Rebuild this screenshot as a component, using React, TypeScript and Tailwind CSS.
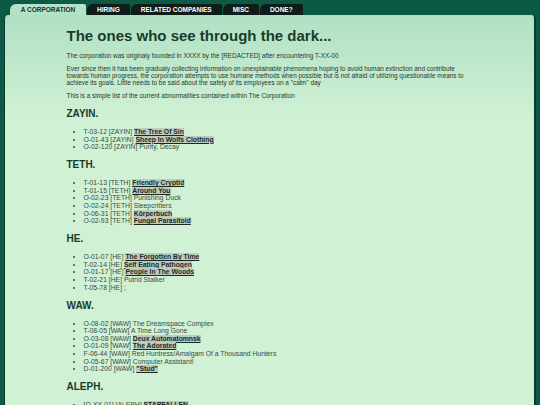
import React from 'react';

type Item = { code: string; name: string; link?: boolean };

const sections: { title: string; items: Item[] }[] = [
  {
    title: 'ZAYIN.',
    items: [
      { code: 'T-03-12 [ZAYIN]', name: 'The Tree Of Sin', link: true },
      { code: 'O-01-43 [ZAYIN]', name: 'Sheep In Wolfs Clothing', link: true },
      { code: 'O-02-120 [ZAYIN]', name: 'Purity, Decay' },
    ],
  },
  {
    title: 'TETH.',
    items: [
      { code: 'T-01-13 [TETH]', name: 'Friendly Cryptid', link: true },
      { code: 'T-01-15 [TETH]', name: 'Around You', link: true },
      { code: 'O-02-23 [TETH]', name: 'Punishing Duck' },
      { code: 'O-02-24 [TETH]', name: 'Sleepcritters' },
      { code: 'O-06-31 [TETH]', name: 'Körperbuch', link: true },
      { code: 'O-02-93 [TETH]', name: 'Fungal Parasitoid', link: true },
    ],
  },
  {
    title: 'HE.',
    items: [
      { code: 'O-01-07 [HE]', name: 'The Forgotten By Time', link: true },
      { code: 'T-02-14 [HE]', name: 'Self Eating Pathogen', link: true },
      { code: 'O-01-17 [HE]', name: 'People In The Woods', link: true },
      { code: 'T-02-21 [HE]', name: 'Putrid Stalker' },
      { code: 'T-05-78 [HE]', name: ';' },
    ],
  },
  {
    title: 'WAW.',
    items: [
      { code: 'O-08-02 [WAW]', name: 'The Dreamspace Complex' },
      { code: 'T-08-05 [WAW]', name: 'A Time Long Gone' },
      { code: 'O-03-08 [WAW]', name: 'Deux Automatomnsk', link: true },
      { code: 'O-01-09 [WAW]', name: 'The Adorated', link: true },
      { code: 'F-06-44 [WAW]', name: 'Red Huntress/Amalgam Of a Thousand Hunters' },
      { code: 'O-05-67 [WAW]', name: 'Computer Assistant!' },
      { code: 'D-01-200 [WAW]', name: '"Stud"', link: true },
    ],
  },
  {
    title: 'ALEPH.',
    items: [{ code: '[O-XX-01] [ALEPH]', name: 'STARFALLEN', link: true }],
  },
];

const tabs = ['HIRING', 'RELATED COMPANIES', 'MISC', 'DONE?'];

export default function App() {
  return (
    <div className="min-h-screen bg-[#0c5a45] px-[4px] pt-[4px] font-['Liberation_Sans',Arial,sans-serif]">
      {/* tabs */}
      <div className="flex h-[11px] items-stretch gap-[1px] pl-[6px]">
        <div className="flex w-[76px] items-center justify-center rounded-tl-[6px] rounded-tr-[2px] bg-[#b3e2c6] text-[6.5px] font-bold text-[#1c2d25]">
          A CORPORATION
        </div>
        {tabs.map((t) => (
          <div
            key={t}
            className="flex items-center justify-center rounded-tl-[6px] rounded-tr-[2px] bg-[#0f1c18] px-[10px] text-[6.5px] font-bold text-white"
          >
            {t}
          </div>
        ))}
      </div>

      {/* panel */}
      <div className="min-h-[400px] rounded-t-[4px] border-l border-r-2 border-l-[#083b2d] border-r-[#083b2d] bg-linear-to-b from-[#b0e0c4] to-[#d0f1d4] to-[25%] pt-[12px] pb-[20px]">
        <div className="mx-auto w-[406px]">
          <h1 className="text-[15px] leading-[18px] font-bold text-[#1b3a2a]">
            The ones who see through the dark...
          </h1>
          <p className="mt-[6.5px] text-[6.4px] leading-[7.4px] text-[#27372e]">
            The corporation was originaly founded in XXXX by the [REDACTED] after encountering T-XX-00
          </p>
          <p className="mt-[5.6px] text-[6.4px] leading-[7.4px] text-[#27372e]">
            Ever since then it has been gradualy collecting information on unexplainable phenomena hoping to avoid human
            extinction and contribute towards human progress, the corporation attempts to use humane methods when possible
            but is not afraid of utilizing questionable means to achieve its goals. Little needs to be said about the safety
            of its employees on a "calm" day
          </p>
          <p className="mt-[5.7px] text-[6.4px] leading-[7.4px] text-[#27372e]">
            This is a simple list of the current abnormalities contained within The Corporation
          </p>

          {sections.map((s, i) => (
            <div key={s.title}>
              <h2
                className={`${i === 0 ? 'mt-[8.3px]' : 'mt-[8.4px]'} mb-[8px] text-[10px] leading-[12px] font-bold text-[#1b3a2a]`}
              >
                {s.title}
              </h2>
              <ul className="list-disc pl-[17px] text-[6.8px] leading-[7.6px] text-[#3d4a42]">
                {s.items.map((it) => (
                  <li key={it.code}>
                    {it.code}{' '}
                    {it.link ? (
                      <a className="bg-[#bccbbf] font-bold text-[#1c2a23] underline">{it.name}</a>
                    ) : (
                      it.name
                    )}
                  </li>
                ))}
              </ul>
            </div>
          ))}
        </div>
      </div>
    </div>
  );
}
